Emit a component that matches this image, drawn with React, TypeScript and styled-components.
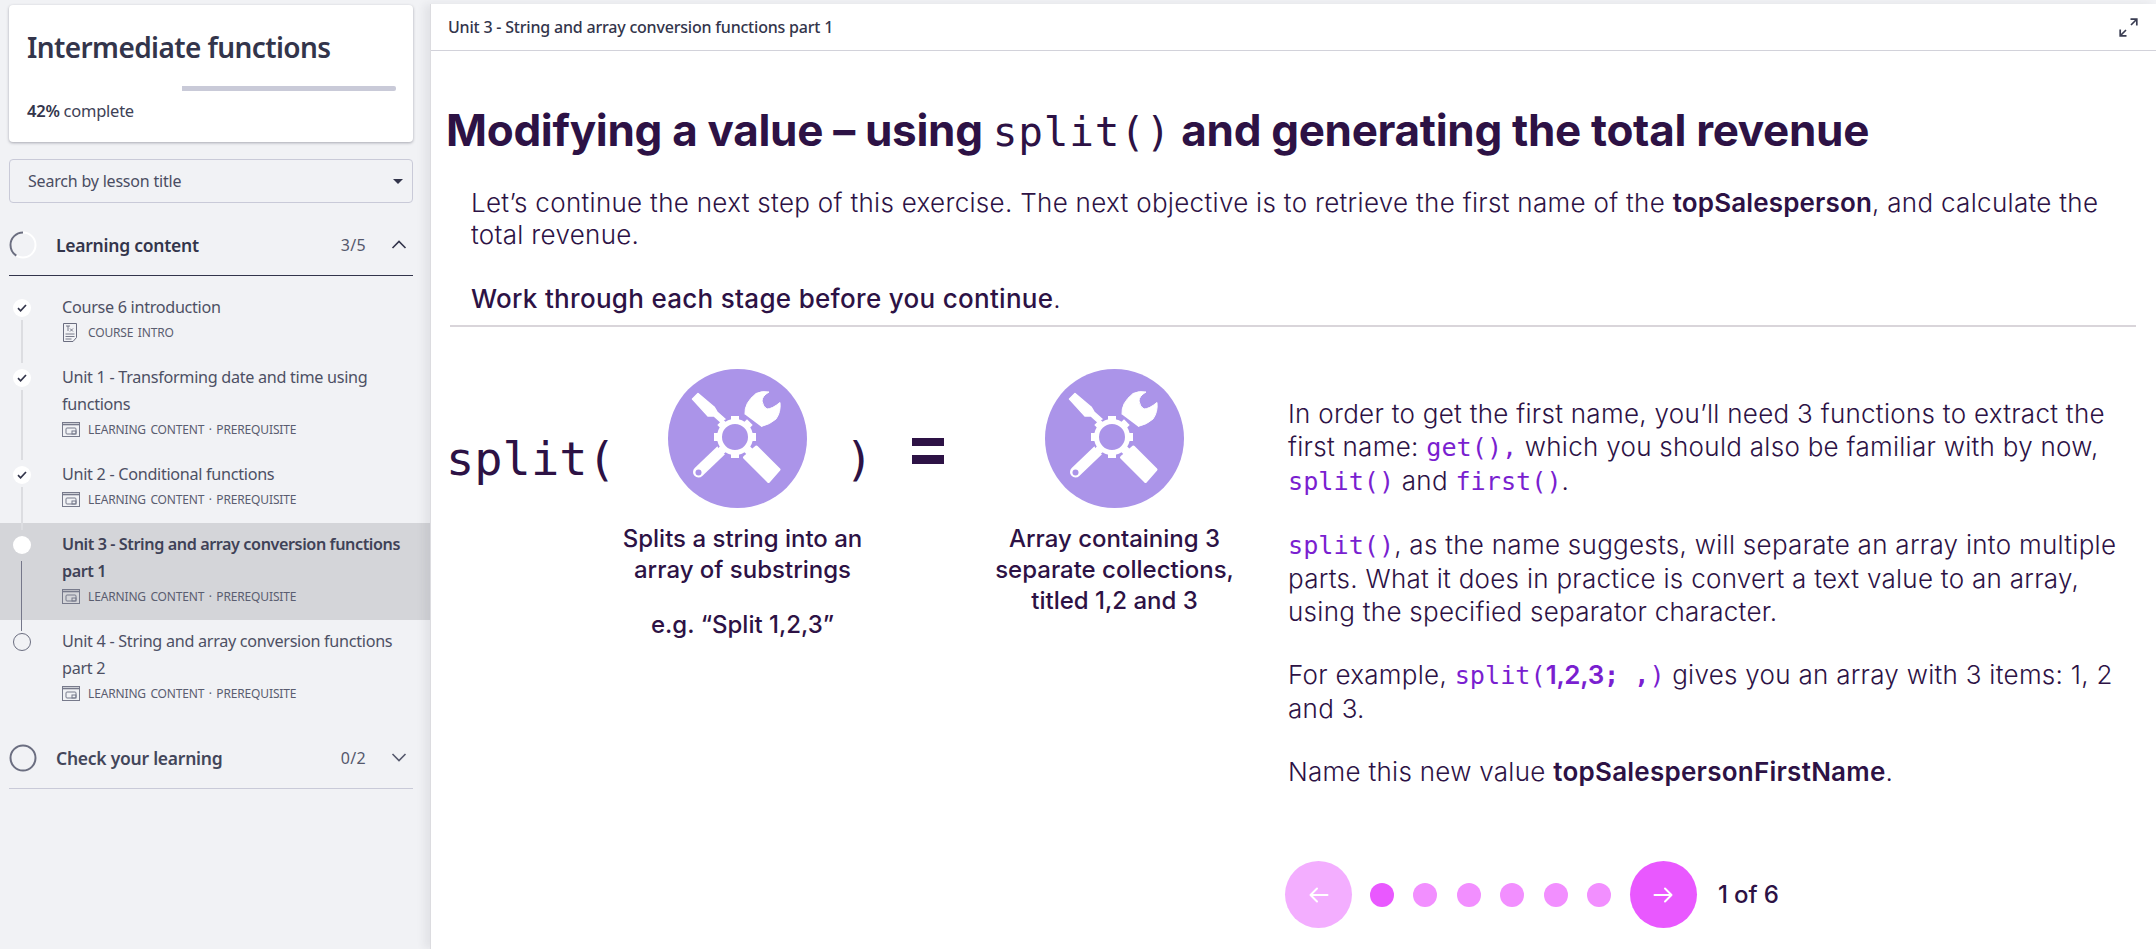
import React from "react";
import styled, { createGlobalStyle } from "styled-components";

const Global = createGlobalStyle`
  html, body { margin: 0; padding: 0; height: 100%; overflow: hidden; background: #f1f2f5; }
  #root { height: 100%; }
  * { box-sizing: border-box; }
`;

const MONO = `"DejaVu Sans Mono", "Liberation Mono", monospace`;

const Page = styled.div`
  display: flex;
  height: 949px;
  width: 2156px;
  overflow: hidden;
  background: #f1f2f5;
`;

const Sidebar = styled.aside`
  width: 430px;
  flex: none;
  padding: 5px 17px 0 9px;
  font-family: "Noto Sans", "Liberation Sans", sans-serif;
  color: #3a3d52;
`;

const Card = styled.div`
  height: 137px;
  background: #fff;
  border-radius: 4px;
  box-shadow: 0 1px 3px rgba(30, 30, 50, 0.35);
  padding: 24px 17px 0 18px;
`;

const CourseTitle = styled.h2`
  margin: 0;
  font-size: 28px;
  line-height: 36px;
  font-weight: 600;
  color: #33354b;
  letter-spacing: -0.6px;
`;

const ProgressTrack = styled.div`
  height: 5px;
  margin-top: 21px;
  background: #c9cad8;
  border-radius: 2px;
`;

const ProgressFill = styled.div`
  height: 100%;
  background: #fff;
`;

const Percent = styled.div`
  margin-top: 9px;
  font-size: 16.5px;
  line-height: 22px;
  letter-spacing: -0.25px;
  color: #3e4156;
  b { font-weight: 600; color: #33354b; }
`;

const Search = styled.div`
  margin-top: 17px;
  height: 44px;
  border: 1px solid #c9cad8;
  border-radius: 4px;
  display: flex;
  align-items: center;
  justify-content: space-between;
  padding: 0 9px 0 18px;
  font-size: 16px;
  letter-spacing: -0.2px;
  color: #4a4d62;
`;

const Caret = styled.span`
  width: 0;
  height: 0;
  border-left: 5px solid transparent;
  border-right: 5px solid transparent;
  border-top: 5px solid #33354b;
`;

const SectionHeader = styled.div<{ $active?: boolean }>`
  height: 62px;
  margin-top: ${p => (p.$active ? 11 : 10)}px;
  display: flex;
  align-items: center;
  padding: 0 6px 0 0;
  border-bottom: 1px solid ${p => (p.$active ? "#33354b" : "#c9cad8")};
`;

const SectionTitle = styled.span<{ $active?: boolean }>`
  margin-left: 19px;
  flex: 1;
  font-size: 17.5px;
  font-weight: 600;
  letter-spacing: -0.25px;
  color: ${p => (p.$active ? "#33354b" : "#43465a")};
`;

const SectionCount = styled.span`
  font-size: 16px;
  color: #55586c;
  letter-spacing: 0.3px;
  margin-right: 25px;
`;

const LessonList = styled.div`
  margin: 10px -17px 0 -9px;
`;

const LessonRow = styled.div<{ $selected?: boolean }>`
  display: flex;
  background: ${p => (p.$selected ? "#d4d5d9" : "transparent")};
`;

const Marker = styled.div`
  width: 62px;
  flex: none;
  display: flex;
  flex-direction: column;
  padding-top: 13px;
`;

const Dot = styled.div<{ $kind: "done" | "current" | "todo" }>`
  width: 18px;
  height: 18px;
  flex: none;
  margin-left: 13px;
  border-radius: 50%;
  background: ${p => (p.$kind === "todo" ? "transparent" : "#fff")};
  border: ${p => (p.$kind === "todo" ? "1px solid #6b6e80" : "none")};
  display: flex;
  align-items: center;
  justify-content: center;
`;

const Connector = styled.div<{ $dark?: boolean }>`
  flex: 1;
  width: ${p => (p.$dark ? 1 : 2)}px;
  margin: ${p => (p.$dark ? "7px 0 -11px 21px" : "3px 0 -7px 21px")};
  background: ${p => (p.$dark ? "#75778a" : "#dcdde1")};
`;

const LessonBody = styled.div`
  flex: 1;
  padding: 8px 18px 13px 0;
`;

const LessonTitle = styled.div<{ $selected?: boolean }>`
  font-size: 16.2px;
  line-height: 27px;
  letter-spacing: ${p => (p.$selected ? -0.42 : -0.3)}px;
  font-weight: ${p => (p.$selected ? 600 : 400)};
  color: ${p => (p.$selected ? "#3f4257" : "#4d5064")};
`;

const LessonMeta = styled.div`
  display: flex;
  align-items: center;
  height: 22px;
  gap: 8px;
  font-size: 12px;
  letter-spacing: -0.15px;
  word-spacing: 1.5px;
  color: #5a5d70;
  text-transform: uppercase;
`;

const Main = styled.main`
  flex: 1;
  margin-top: 4px;
  background: #fff;
  border-left: 1px solid #dcdce0;
  box-shadow: -6px 0 8px rgba(40, 40, 60, 0.07);
  font-family: Inter, "Liberation Sans", sans-serif;
  color: #2d1245;
  min-width: 0;
`;

const TopBar = styled.div`
  height: 47px;
  display: flex;
  align-items: center;
  justify-content: space-between;
  padding: 0 18px 0 17px;
  border-bottom: 1px solid #d2d2da;
  font-family: "Noto Sans", "Liberation Sans", sans-serif;
  font-size: 16px;
  font-weight: 500;
  color: #33354b;
  letter-spacing: -0.2px;
`;

const Heading = styled.h1`
  margin: 49px 0 0 15px;
  font-size: 44px;
  line-height: 60px;
  font-weight: 700;
  letter-spacing: -0.3px;
  white-space: nowrap;
  color: #2d1245;
`;

const HeadingCode = styled.code`
  font-family: ${MONO};
  font-weight: 400;
  font-size: 41px;
  letter-spacing: 0.8px;
`;

const Intro = styled.div`
  margin: 25px 20px 0 40px;
  font-size: 26px;
  line-height: 32px;
  font-weight: 300;
  letter-spacing: 0.3px;
  b { font-weight: 600; letter-spacing: 0.15px; }
`;

const Callout = styled.p`
  margin: 32px 0 0;
  b { font-weight: 500; letter-spacing: 0.3px; }
`;

const IntroText = styled.p`
  margin: 0;
`;

const Divider = styled.hr`
  margin: 10px 20px 0 19px;
  border: 0;
  height: 2px;
  background: #d9d5da;
`;

const Lower = styled.div`
  display: flex;
`;

const Diagram = styled.div`
  width: 857px;
  flex: none;
  padding: 42px 0 0 15px;
  display: grid;
  grid-template-columns: 222px 139px 105px 32px 101px 139px;
  grid-template-rows: 139px auto;
  align-content: start;
`;

const FnText = styled.div`
  font-family: ${MONO};
  font-size: 47px;
  line-height: 60px;
  align-self: center;
  margin-top: 40px;
`;

const CloseParen = styled(FnText)`
  padding-left: 38px;
`;

const EqualsMark = styled.div`
  align-self: center;
  margin-top: 24px;
  height: 26px;
  border-top: 8px solid #2d1245;
  border-bottom: 9px solid #2d1245;
`;

const Caption = styled.div<{ $column: number; $shift?: number }>`
  grid-column: ${p => p.$column};
  grid-row: 2;
  justify-self: center;
  width: max-content;
  margin: 15px 0 0 ${p => p.$shift ?? 0}px;
  text-align: center;
  font-size: 24px;
  line-height: 31px;
  font-weight: 500;
`;

const CaptionGap = styled.div`
  height: 24px;
`;

const Explain = styled.div`
  flex: 1;
  padding: 70px 25px 0 0;
  font-size: 26px;
  line-height: 33px;
  font-weight: 300;
  letter-spacing: 0.28px;
  b { font-weight: 600; letter-spacing: 0.25px; }
`;

const ExplainPara = styled.p`
  margin: 0 0 30px;
`;

const Code = styled.code`
  font-family: ${MONO};
  color: #7a1fd0;
  font-weight: 400;
  font-size: 25.2px;
  letter-spacing: 0;
  b { font-family: Inter, sans-serif; font-weight: 600; font-size: 26px; letter-spacing: -0.3px; }
  strong { font-weight: 700; }
`;

const Pager = styled.div`
  display: flex;
  align-items: center;
  margin: 73px 0 0 -3px;
`;

const RoundButton = styled.div<{ $dim?: boolean }>`
  width: 67px;
  height: 67px;
  flex: none;
  border-radius: 50%;
  background: ${p => (p.$dim ? "#f3aeff" : "#e958ff")};
  display: flex;
  align-items: center;
  justify-content: center;
  color: #fff;
`;

const PagerDots = styled.div`
  display: flex;
  gap: 19.4px;
  margin: 0 19px 0 18px;
`;

const PagerDot = styled.div<{ $on?: boolean }>`
  width: 24px;
  height: 24px;
  border-radius: 50%;
  background: ${p => (p.$on ? "#e958ff" : "#f28fff")};
`;

const PagerLabel = styled.div`
  margin-left: 21px;
  font-size: 24px;
  font-weight: 500;
  letter-spacing: -0.1px;
`;

const Check = () => (
  <svg width="10" height="8" viewBox="0 0 10 8" fill="none" stroke="#33354b" strokeWidth="1.7">
    <path d="M1 4.2 3.6 6.8 9 1" />
  </svg>
);

const DocIcon = () => (
  <svg width="18" height="19" viewBox="0 0 18 19" fill="none" stroke="#6b6e80" strokeWidth="1">
    <path d="M1.5.5h13v14l-3.5 4h-9.5z" />
    <path d="M4 3h4M6 3v5M8 5.5l3 3M11 5.5l-3 3M3.5 11h9M3.5 13.5h9M3.5 16h6" strokeWidth=".9" />
  </svg>
);

const WindowIcon = () => (
  <svg width="18" height="15" viewBox="0 0 18 15" fill="none" stroke="#777a8b" strokeWidth="1">
    <rect x=".5" y=".5" width="17" height="14" />
    <path d="M.5 2.5h17" strokeWidth="1.6" />
    <rect x="4" y="6" width="10" height="6" rx="1" />
    <rect x="10" y="9" width="4" height="3" />
  </svg>
);

const Ring = ({ active }: { active?: boolean }) => (
  <svg width="28" height="28" viewBox="0 0 28 28" fill="none" strokeWidth="2">
    {active ? (
      <>
        <circle cx="14" cy="14" r="12.5" stroke="#fff" />
        <path d="M14 1.5A12.5 12.5 0 0 0 14 26.5" stroke="#6b6e80" strokeDasharray="32 40" />
      </>
    ) : (
      <circle cx="14" cy="14" r="12.5" stroke="#6b6e80" />
    )}
  </svg>
);

const Chevron = ({ up }: { up?: boolean }) => (
  <svg width="16" height="9" viewBox="0 0 16 9" fill="none" stroke={up ? "#33354b" : "#55586c"} strokeWidth="1.6">
    <path d={up ? "M1.5 8 8 1.5 14.5 8" : "M1.5 1 8 7.5 14.5 1"} />
  </svg>
);

const ExpandIcon = () => (
  <svg width="19" height="19" viewBox="0 0 19 19" fill="none" stroke="#3a3d52" strokeWidth="1.7">
    <path d="M11.5 1.2h6.3v6.3M17.5 1.5l-5.5 5.5M7.5 17.8H1.2v-6.3M1.5 17.5 7 12" />
  </svg>
);

const Arrow = ({ back }: { back?: boolean }) => (
  <svg width="20" height="16" viewBox="0 0 20 16" fill="none" stroke="#fff" strokeWidth="2" strokeLinecap="round" strokeLinejoin="round">
    <path d={back ? "M18.5 8H1.5M8 1.5 1.5 8 8 14.5" : "M1.5 8h17M12 1.5 18.5 8 12 14.5"} />
  </svg>
);

const teeth = [0, 45, 90, 135, 180, 225, 270, 315];

const ToolBadge = () => (
  <svg width="139" height="139" viewBox="0 0 139 139">
    <circle cx="69.5" cy="69.5" r="69.5" fill="#ab94e9" />
    <g fill="#fff" stroke="#fff" strokeLinejoin="round">
      <path d="M24.5 30 30 24.5 46 38 49 43 58 51 55 55 46 47 40 47z" strokeWidth="1.5" />
      <path d="M77 45.5Q76 34 88 24.5 94 21.5 101 23 94 27 94 32 95 38 99 40 104 40 112 33.5 113 43 108 50 102 55.5 93 57.5 86 56.5L82 59 76 48z" strokeWidth="1" />
      <path d="M76.5 88.5 88.5 78 111 100.5 100.5 112.5z" strokeWidth="3" />
      <path d="M30.5 103 53.5 81" strokeWidth="11" strokeLinecap="round" fill="none" />
    </g>
    <circle cx="30.5" cy="103.5" r="3" fill="#ab94e9" />
    <circle cx="67" cy="68" r="20" fill="#ab94e9" />
    <circle cx="67" cy="68" r="15.5" fill="none" stroke="#fff" strokeWidth="5" />
    {teeth.map(a => (
      <rect key={a} x="63" y="47" width="8" height="6" fill="#fff" transform={`rotate(${a} 67 68)`} />
    ))}
  </svg>
);

const meta = (
  <LessonMeta>
    <WindowIcon />
    <span>Learning content · Prerequisite</span>
  </LessonMeta>
);

export default function App() {
  return (
    <Page>
      <Global />
      <Sidebar>
        <Card>
          <CourseTitle>Intermediate functions</CourseTitle>
          <ProgressTrack>
            <ProgressFill style={{ width: "42%" }} />
          </ProgressTrack>
          <Percent>
            <b>42%</b> complete
          </Percent>
        </Card>
        <Search>
          <span>Search by lesson title</span>
          <Caret />
        </Search>
        <SectionHeader $active>
          <Ring active />
          <SectionTitle $active>Learning content</SectionTitle>
          <SectionCount>3/5</SectionCount>
          <Chevron up />
        </SectionHeader>
        <LessonList>
          <LessonRow>
            <Marker>
              <Dot $kind="done"><Check /></Dot>
              <Connector />
            </Marker>
            <LessonBody>
              <LessonTitle>Course 6 introduction</LessonTitle>
              <LessonMeta>
                <DocIcon />
                <span>Course intro</span>
              </LessonMeta>
            </LessonBody>
          </LessonRow>
          <LessonRow>
            <Marker>
              <Dot $kind="done"><Check /></Dot>
              <Connector />
            </Marker>
            <LessonBody>
              <LessonTitle>Unit 1 - Transforming date and time using functions</LessonTitle>
              {meta}
            </LessonBody>
          </LessonRow>
          <LessonRow>
            <Marker>
              <Dot $kind="done"><Check /></Dot>
              <Connector />
            </Marker>
            <LessonBody>
              <LessonTitle>Unit 2 - Conditional functions</LessonTitle>
              {meta}
            </LessonBody>
          </LessonRow>
          <LessonRow $selected>
            <Marker>
              <Dot $kind="current" />
              <Connector $dark />
            </Marker>
            <LessonBody>
              <LessonTitle $selected>Unit 3 - String and array conversion functions part 1</LessonTitle>
              {meta}
            </LessonBody>
          </LessonRow>
          <LessonRow>
            <Marker>
              <Dot $kind="todo" />
            </Marker>
            <LessonBody>
              <LessonTitle>Unit 4 - String and array conversion functions part 2</LessonTitle>
              {meta}
            </LessonBody>
          </LessonRow>
        </LessonList>
        <SectionHeader>
          <Ring />
          <SectionTitle>Check your learning</SectionTitle>
          <SectionCount>0/2</SectionCount>
          <Chevron />
        </SectionHeader>
      </Sidebar>
      <Main>
        <TopBar>
          <span>Unit 3 - String and array conversion functions part 1</span>
          <ExpandIcon />
        </TopBar>
        <Heading>
          Modifying a value – using <HeadingCode>split()</HeadingCode> and generating the total revenue
        </Heading>
        <Intro>
          <IntroText>
            Let’s continue the next step of this exercise. The next objective is to retrieve the first name of the{" "}
            <b>topSalesperson</b>, and calculate the total revenue.
          </IntroText>
          <Callout>
            <b>Work through each stage before you continue</b>.
          </Callout>
        </Intro>
        <Divider />
        <Lower>
          <Diagram>
            <FnText>split(</FnText>
            <ToolBadge />
            <CloseParen>)</CloseParen>
            <EqualsMark />
            <span />
            <ToolBadge />
            <Caption $column={2} $shift={10}>
              Splits a string into an
              <br />
              array of substrings
              <CaptionGap />
              e.g. “Split 1,2,3”
            </Caption>
            <Caption $column={6}>
              Array containing 3
              <br />
              separate collections,
              <br />
              titled 1,2 and 3
            </Caption>
          </Diagram>
          <Explain>
            <ExplainPara>
              In order to get the first name, you’ll need 3 functions to extract the first name: <Code>get(),</Code> which
              you should also be familiar with by now, <Code>split()</Code> and <Code>first()</Code>.
            </ExplainPara>
            <ExplainPara>
              <Code>split()</Code>, as the name suggests, will separate an array into multiple parts. What it does in
              practice is convert a text value to an array, using the specified separator character.
            </ExplainPara>
            <ExplainPara>
              For example, <Code>split(<b>1,2,3</b><strong>; ,</strong>)</Code> gives you an array with 3 items: 1, 2 and 3.
            </ExplainPara>
            <ExplainPara>
              Name this new value <b>topSalespersonFirstName</b>.
            </ExplainPara>
            <Pager>
              <RoundButton $dim><Arrow back /></RoundButton>
              <PagerDots>
                <PagerDot $on />
                <PagerDot />
                <PagerDot />
                <PagerDot />
                <PagerDot />
                <PagerDot />
              </PagerDots>
              <RoundButton><Arrow /></RoundButton>
              <PagerLabel>1 of 6</PagerLabel>
            </Pager>
          </Explain>
        </Lower>
      </Main>
    </Page>
  );
}
